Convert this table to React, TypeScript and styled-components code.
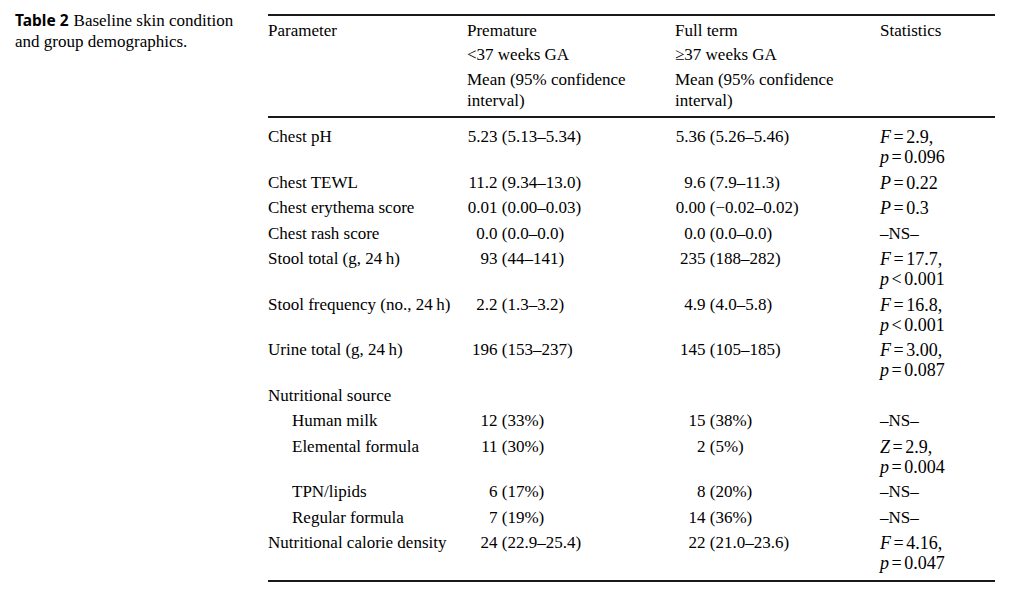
import React from "react";
import styled, { createGlobalStyle } from "styled-components";

const Global = createGlobalStyle`
  html, body { margin: 0; padding: 0; background: #fff; }
  body { color: #000; font-family: "Liberation Serif", "Times New Roman", serif; }
`;

const Page = styled.div`
  display: flex;
  align-items: flex-start;
  padding: 9.5px 0 0 15px;
`;

const Caption = styled.div`
  flex: 0 0 253px;
  box-sizing: border-box;
  padding-right: 16px;
  font-size: 17px;
  line-height: 21px;
`;

const CaptionLine = styled.div`
  display: flex;
  align-items: baseline;
  gap: 5px;
  white-space: nowrap;
`;

const Label = styled.span`
  font-family: "Noto Sans", "Liberation Sans", sans-serif;
  font-weight: 700;
  font-size: 15.5px;
`;

const Table = styled.div`
  width: 727px;
  margin-top: 4.5px;
  border-top: 2px solid #1a1a1a;
  border-bottom: 2px solid #1a1a1a;
  font-size: 17px;
`;

const Row = styled.div<{ $head?: boolean }>`
  display: grid;
  grid-template-columns: 199px 208px 205px 115px;
  padding: ${(p) => (p.$head ? "3.5px 0 5.5px" : "2.75px 0")};
  line-height: ${(p) => (p.$head ? "21px" : "20px")};
  border-bottom: ${(p) => (p.$head ? "2px solid #1a1a1a" : "none")};
`;

const Body = styled.div`
  padding: 6.25px 0 4.25px;
`;

const Cell = styled.div<{ $indent?: boolean }>`
  display: flex;
  flex-direction: column;
  padding-left: ${(p) => (p.$indent ? "24px" : "0")};
  padding-right: 8px;
`;

const HeadCell = styled(Cell)`
  gap: 3.5px;
`;

const Num = styled.span`
  display: inline-block;
  width: 30.5px;
  text-align: right;
`;

const MathLine = styled.div`
  font-size: 18px;
  white-space: nowrap;
`;

const Var = styled.i`
  font-style: italic;
`;

const Op = styled.span`
  padding: 0 2.5px;
`;

type Stat = string | [string, string, string];

interface DataRow {
  param: string;
  indent?: boolean;
  pre?: [string, string];
  full?: [string, string];
  stats?: Stat[];
}

const rows: DataRow[] = [
  { param: "Chest pH", pre: ["5.23", "(5.13–5.34)"], full: ["5.36", "(5.26–5.46)"], stats: [["F", "=", "2.9,"], ["p", "=", "0.096"]] },
  { param: "Chest TEWL", pre: ["11.2", "(9.34–13.0)"], full: ["9.6", "(7.9–11.3)"], stats: [["P", "=", "0.22"]] },
  { param: "Chest erythema score", pre: ["0.01", "(0.00–0.03)"], full: ["0.00", "(−0.02–0.02)"], stats: [["P", "=", "0.3"]] },
  { param: "Chest rash score", pre: ["0.0", "(0.0–0.0)"], full: ["0.0", "(0.0–0.0)"], stats: ["–NS–"] },
  { param: "Stool total (g, 24\u2009h)", pre: ["93", "(44–141)"], full: ["235", "(188–282)"], stats: [["F", "=", "17.7,"], ["p", "<", "0.001"]] },
  { param: "Stool frequency (no., 24\u2009h)", pre: ["2.2", "(1.3–3.2)"], full: ["4.9", "(4.0–5.8)"], stats: [["F", "=", "16.8,"], ["p", "<", "0.001"]] },
  { param: "Urine total (g, 24\u2009h)", pre: ["196", "(153–237)"], full: ["145", "(105–185)"], stats: [["F", "=", "3.00,"], ["p", "=", "0.087"]] },
  { param: "Nutritional source" },
  { param: "Human milk", indent: true, pre: ["12", "(33%)"], full: ["15", "(38%)"], stats: ["–NS–"] },
  { param: "Elemental formula", indent: true, pre: ["11", "(30%)"], full: ["2", "(5%)"], stats: [["Z", "=", "2.9,"], ["p", "=", "0.004"]] },
  { param: "TPN/lipids", indent: true, pre: ["6", "(17%)"], full: ["8", "(20%)"], stats: ["–NS–"] },
  { param: "Regular formula", indent: true, pre: ["7", "(19%)"], full: ["14", "(36%)"], stats: ["–NS–"] },
  { param: "Nutritional calorie density", pre: ["24", "(22.9–25.4)"], full: ["22", "(21.0–23.6)"], stats: [["F", "=", "4.16,"], ["p", "=", "0.047"]] },
];

const Value: React.FC<{ v?: [string, string] }> = ({ v }) => (
  <Cell>
    {v ? (
      <div>
        <Num>{v[0]}</Num> {v[1]}
      </div>
    ) : null}
  </Cell>
);

const Stats: React.FC<{ s?: Stat[] }> = ({ s }) => (
  <Cell>
    {(s || []).map((line, i) =>
      typeof line === "string" ? (
        <div key={i}>{line}</div>
      ) : (
        <MathLine key={i}>
          <Var>{line[0]}</Var>
          <Op>{line[1]}</Op>
          {line[2]}
        </MathLine>
      )
    )}
  </Cell>
);

export default function App() {
  return (
    <>
      <Global />
      <Page>
        <Caption>
          <CaptionLine>
            <Label>Table 2</Label>
            <span>Baseline skin condition</span>
          </CaptionLine>
          <CaptionLine>
            <span>and group demographics.</span>
          </CaptionLine>
        </Caption>
        <Table>
          <Row $head>
            <HeadCell>
              <div>Parameter</div>
            </HeadCell>
            <HeadCell>
              <div>Premature</div>
              <div>&lt;37 weeks GA</div>
              <div>Mean (95% confidence interval)</div>
            </HeadCell>
            <HeadCell>
              <div>Full term</div>
              <div>≥37 weeks GA</div>
              <div>Mean (95% confidence interval)</div>
            </HeadCell>
            <HeadCell>
              <div>Statistics</div>
            </HeadCell>
          </Row>
          <Body>
            {rows.map((r) => (
              <Row key={r.param}>
                <Cell $indent={r.indent}>
                  <div>{r.param}</div>
                </Cell>
                <Value v={r.pre} />
                <Value v={r.full} />
                <Stats s={r.stats} />
              </Row>
            ))}
          </Body>
        </Table>
      </Page>
    </>
  );
}
